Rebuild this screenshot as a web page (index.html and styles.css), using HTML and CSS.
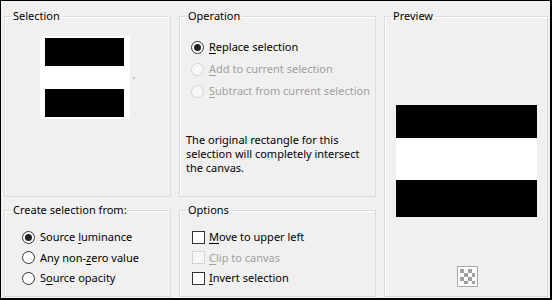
FILE: index.html
```html
<!DOCTYPE html>
<html lang="en">
<head>
    <meta charset="UTF-8">
    <title>Promote Selection</title>
    <link rel="stylesheet" href="styles.css">
</head>
<body>
    <div class="dialog">
        <fieldset class="group group-selection">
            <legend>Selection</legend>
            <div class="thumb-wrap">
                <div class="thumb">
                    <div class="bar"></div>
                    <div class="gap"></div>
                    <div class="bar"></div>
                </div>
                <span class="thumb-dot"></span>
            </div>
        </fieldset>

        <fieldset class="group group-operation">
            <legend>Operation</legend>
            <div class="op-list">
                <div class="row"><span class="radio checked"></span><span><u>R</u>eplace selection</span></div>
                <div class="row disabled"><span class="radio"></span><span><u>A</u>dd to current selection</span></div>
                <div class="row disabled"><span class="radio"></span><span><u>S</u>ubtract from current selection</span></div>
            </div>
            <p class="note">The original rectangle for this selection will completely intersect the canvas.</p>
        </fieldset>

        <fieldset class="group group-preview">
            <legend>Preview</legend>
            <div class="preview">
                <div class="bar"></div>
                <div class="gap"></div>
                <div class="bar"></div>
            </div>
            <span class="checker">
                <svg width="21" height="21" viewBox="0 0 21 21">
                    <rect x="0.5" y="0.5" width="20" height="20" fill="#fff" stroke="#a9a9a9"/>
                    <g fill="#a0a0a0">
                        <rect x="3" y="3" width="4" height="4"/>
                        <rect x="11" y="3" width="4" height="4"/>
                        <rect x="7" y="7" width="4" height="4"/>
                        <rect x="15" y="7" width="3" height="4"/>
                        <rect x="3" y="11" width="4" height="4"/>
                        <rect x="11" y="11" width="4" height="4"/>
                        <rect x="7" y="15" width="4" height="3"/>
                        <rect x="15" y="15" width="3" height="3"/>
                    </g>
                </svg>
            </span>
        </fieldset>

        <fieldset class="group group-create">
            <legend>Create selection from:</legend>
            <div class="src-list">
                <div class="row"><span class="radio checked"></span><span>Source <u>l</u>uminance</span></div>
                <div class="row"><span class="radio"></span><span>Any non-<u>z</u>ero value</span></div>
                <div class="row"><span class="radio"></span><span>S<u>o</u>urce opacity</span></div>
            </div>
        </fieldset>

        <fieldset class="group group-options">
            <legend>Options</legend>
            <div class="opt-list">
                <div class="row"><span class="check"></span><span><u>M</u>ove to upper left</span></div>
                <div class="row disabled"><span class="check"></span><span><u>C</u>lip to canvas</span></div>
                <div class="row"><span class="check"></span><span><u>I</u>nvert selection</span></div>
            </div>
        </fieldset>
    </div>
</body>
</html>
```

FILE: styles.css
```css
html, body {
    margin: 0;
    padding: 0;
}
body {
    font-family: "Noto Sans", "Open Sans", sans-serif;
    font-size: 11px;
    color: #000;
    background-color: #fff;
}
.dialog {
    box-sizing: border-box;
    width: 552px;
    height: 300px;
    background-color: #f0f0f0;
    border-style: solid;
    border-color: #000;
    border-width: 1px 2px 2px 1px;
    padding: 7px 2px 1px 3px;
    display: grid;
    grid-template-columns: 167px 197px 164px;
    grid-template-rows: 189px 95px;
    column-gap: 8px;
    row-gap: 5px;
}
.group {
    margin: 0;
    padding: 0;
    min-width: 0;
    border: 1px solid #dcdcdc;
    box-shadow: inset 1px 1px 0 #fff;
}
.group legend {
    margin-left: 6px;
    padding: 0 2px;
    line-height: 16px;
    font-size: 11px;
}
.group-preview {
    grid-column: 3;
    grid-row: 1 / 3;
    display: flex;
    flex-direction: column;
    align-items: center;
}
.group-create {
    grid-column: 1;
    grid-row: 2;
}
.group-options {
    grid-column: 2;
    grid-row: 2;
}

/* selection thumbnail */
.thumb-wrap {
    display: flex;
    align-items: center;
    margin: 12px 0 0 35px;
}
.thumb {
    width: 79px;
    height: 79px;
    padding: 2px 6px 2px 5px;
    background-color: #fff;
    display: flex;
    flex-direction: column;
}
.thumb .bar {
    height: 28px;
    background-color: #000;
}
.thumb .gap {
    height: 23px;
}
.thumb-dot {
    width: 2px;
    height: 2px;
    margin-left: 3px;
    background-color: #c4c4c4;
}

/* rows with radios and checks */
.row {
    display: flex;
    align-items: center;
    white-space: nowrap;
}
.row u {
    text-decoration-thickness: 1px;
    text-underline-offset: 2px;
}
.row.disabled {
    color: #a0a0a0;
}
.radio {
    box-sizing: border-box;
    width: 13px;
    height: 13px;
    border: 1px solid #333;
    border-radius: 50%;
    background-color: #fff;
    margin-right: 5px;
    display: flex;
    align-items: center;
    justify-content: center;
    flex: none;
}
.radio.checked::after {
    content: "";
    width: 7px;
    height: 7px;
    border-radius: 50%;
    background-color: #222;
}
.row.disabled .radio {
    border-color: #d4d4d4;
    background-color: #f7f7f7;
}
.check {
    box-sizing: border-box;
    width: 13px;
    height: 13px;
    border: 1px solid #333;
    background-color: #fff;
    margin-right: 4px;
    flex: none;
}
.row.disabled .check {
    border-color: #d4d4d4;
    background-color: #f7f7f7;
}

.op-list {
    margin: 12px 0 0 11px;
}
.op-list .row {
    height: 22px;
}
.note {
    margin: 31px 6px 0 6px;
    line-height: 14px;
}
.src-list {
    margin: 9px 0 0 17px;
}
.src-list .row {
    height: 20.5px;
}
.radio + span,
.check + span {
    line-height: 16px;
}
.opt-list {
    margin: 9px 0 0 12px;
}
.opt-list .row {
    height: 20.5px;
}

/* preview */
.preview {
    width: 141px;
    height: 112px;
    margin-top: 81px;
    display: flex;
    flex-direction: column;
    background-color: #fff;
}
.preview .bar {
    height: 33px;
    background-color: #000;
}
.preview .gap {
    height: 42px;
}
.preview .bar:last-child {
    height: 37px;
}
.checker {
    margin-top: 49px;
    display: flex;
    margin-left: 2px;
}
```
